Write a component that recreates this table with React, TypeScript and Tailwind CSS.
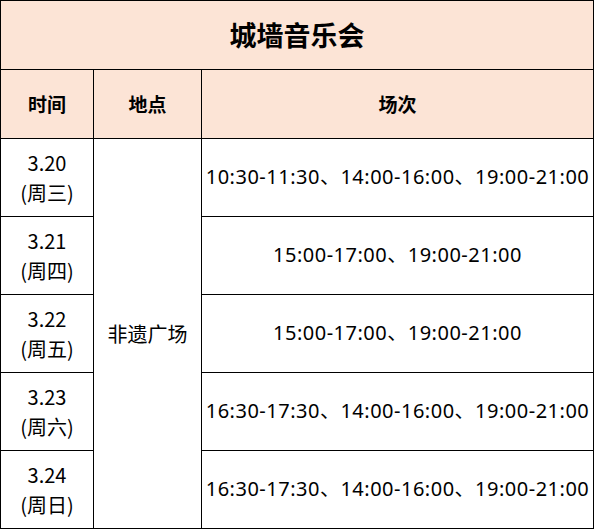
import React from "react";

const rows = [
  { d: "3.20", w: "(周三)", t: "10:30-11:30、14:00-16:00、19:00-21:00" },
  { d: "3.21", w: "(周四)", t: "15:00-17:00、19:00-21:00" },
  { d: "3.22", w: "(周五)", t: "15:00-17:00、19:00-21:00" },
  { d: "3.23", w: "(周六)", t: "16:30-17:30、14:00-16:00、19:00-21:00" },
  { d: "3.24", w: "(周日)", t: "16:30-17:30、14:00-16:00、19:00-21:00" },
];

export default function App() {
  return (
    <div
      className="w-[594px] bg-white text-black"
      style={{ fontFamily: '"Noto Sans CJK SC", "Noto Sans", sans-serif' }}
    >
      <div className="grid grid-cols-[92px_107px_391px] grid-rows-[68px_68px_77px_77px_77px_77px_77px] gap-px bg-black p-px">
        <div className="col-span-3 bg-[#fce4d6] flex items-center justify-center text-[27px] font-bold">
          城墙音乐会
        </div>
        <div className="bg-[#fce4d6] flex items-center justify-center text-[19px] font-bold">时间</div>
        <div className="bg-[#fce4d6] flex items-center justify-center text-[19px] font-bold">地点</div>
        <div className="bg-[#fce4d6] flex items-center justify-center text-[19px] font-bold">场次</div>
        {rows.map((r, i) => (
          <React.Fragment key={i}>
            <div className="bg-white flex flex-col items-center justify-center text-[20px] leading-[30px]">
              <span>{r.d}</span>
              <span>{r.w}</span>
            </div>
            {i === 0 && (
              <div className="row-span-5 bg-white flex items-center justify-center text-[20px]">
                非遗广场
              </div>
            )}
            <div
              className="bg-white flex items-center justify-center text-[20px] tracking-[0.5px] whitespace-nowrap pb-[2px]"
              style={{ fontFamily: '"Noto Sans", "Noto Sans CJK SC", sans-serif' }}
            >
              {r.t}
            </div>
          </React.Fragment>
        ))}
      </div>
    </div>
  );
}
